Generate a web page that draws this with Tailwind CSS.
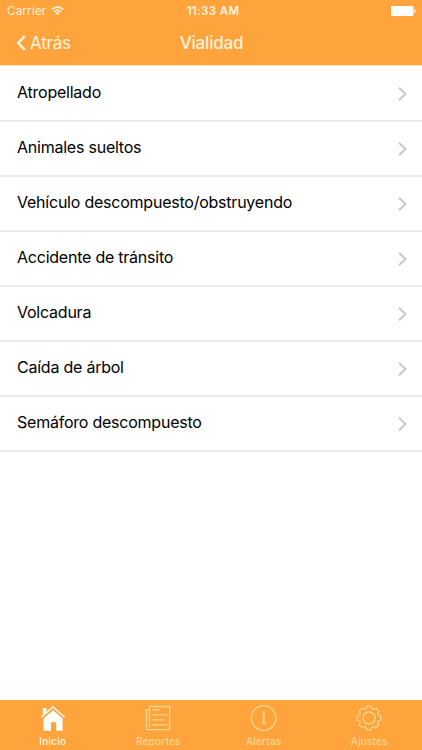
<!DOCTYPE html>
<html lang="es">
<head>
    <meta charset="UTF-8">
    <meta name="viewport" content="width=device-width, initial-scale=1.0">
    <title>Vialidad</title>
    <script src="https://cdn.jsdelivr.net/npm/@tailwindcss/browser@4"></script>
</head>
<body class="flex flex-col h-screen overflow-hidden bg-white font-['Inter',sans-serif]">
    <header class="h-[66px] shrink-0 bg-[#ffa43c] text-[#fff3de] border-b border-[#ffdcb2]">
        <div class="grid grid-cols-3 items-center h-[22px] px-[7px] text-[11.5px]">
            <div class="flex items-center gap-[5px] pt-[1px]">
                <span class="tracking-[0.25px]">Carrier</span>
                <svg class="w-[13px] h-[9px] -mt-[2px]" viewBox="0 0 13 9" fill="none" stroke="currentColor" stroke-width="1.7">
                    <path d="M.8 3.5a8.2 8.2 0 0 1 11.4 0M2.8 5.8a5.4 5.4 0 0 1 7.4 0"/>
                    <path d="M6.5 9 4.4 7a3 3 0 0 1 4.2 0Z" fill="currentColor" stroke="none"/>
                </svg>
            </div>
            <span class="text-center font-semibold tracking-[0.35px] pl-1 pt-[2px]">11:33 AM</span>
            <svg class="w-[25px] h-[10px] justify-self-end -mr-[1px]" viewBox="0 0 25 10" fill="#fff">
                <rect width="22.5" height="10" rx="1.2"/>
                <path d="M23.3 3.2h.5q.9.4.9 1.8t-.9 1.8h-.5z"/>
            </svg>
        </div>
        <div class="grid grid-cols-3 items-center h-[43px] px-4 text-[17px]">
            <a href="#" class="flex items-center gap-[4px] tracking-[-0.2px]">
                <svg class="w-[10px] h-4 -mt-[2px]" viewBox="0 0 10 16" fill="none" stroke="currentColor" stroke-width="2.5">
                    <path d="M8.8 1.2 2.2 8l6.6 6.8"/>
                </svg>
                Atrás
            </a>
            <h1 class="text-center font-medium tracking-[-0.2px] pl-[1px]">Vialidad</h1>
        </div>
    </header>

    <ul class="flex-1 pt-[1px] text-base text-black tracking-[-0.23px]">
        <li class="flex items-center justify-between h-[55px] pl-[17px] pr-[15px] border-b-2 border-[#e9e9e9]">
            <span class="pb-[3px]">Atropellado</span>
            <svg class="w-[9px] h-[14px]" viewBox="0 0 9 14" fill="none" stroke="#c7c7cc" stroke-width="2"><path d="M1 .8 7.5 7 1 13.2"/></svg>
        </li>
        <li class="flex items-center justify-between h-[55px] pl-[17px] pr-[15px] border-b-2 border-[#e9e9e9]">
            <span class="pb-[3px]">Animales sueltos</span>
            <svg class="w-[9px] h-[14px]" viewBox="0 0 9 14" fill="none" stroke="#c7c7cc" stroke-width="2"><path d="M1 .8 7.5 7 1 13.2"/></svg>
        </li>
        <li class="flex items-center justify-between h-[55px] pl-[17px] pr-[15px] border-b-2 border-[#e9e9e9]">
            <span class="pb-[3px]">Vehículo descompuesto/obstruyendo</span>
            <svg class="w-[9px] h-[14px]" viewBox="0 0 9 14" fill="none" stroke="#c7c7cc" stroke-width="2"><path d="M1 .8 7.5 7 1 13.2"/></svg>
        </li>
        <li class="flex items-center justify-between h-[55px] pl-[17px] pr-[15px] border-b-2 border-[#e9e9e9]">
            <span class="pb-[3px]">Accidente de tránsito</span>
            <svg class="w-[9px] h-[14px]" viewBox="0 0 9 14" fill="none" stroke="#c7c7cc" stroke-width="2"><path d="M1 .8 7.5 7 1 13.2"/></svg>
        </li>
        <li class="flex items-center justify-between h-[55px] pl-[17px] pr-[15px] border-b-2 border-[#e9e9e9]">
            <span class="pb-[3px]">Volcadura</span>
            <svg class="w-[9px] h-[14px]" viewBox="0 0 9 14" fill="none" stroke="#c7c7cc" stroke-width="2"><path d="M1 .8 7.5 7 1 13.2"/></svg>
        </li>
        <li class="flex items-center justify-between h-[55px] pl-[17px] pr-[15px] border-b-2 border-[#e9e9e9]">
            <span class="pb-[3px]">Caída de árbol</span>
            <svg class="w-[9px] h-[14px]" viewBox="0 0 9 14" fill="none" stroke="#c7c7cc" stroke-width="2"><path d="M1 .8 7.5 7 1 13.2"/></svg>
        </li>
        <li class="flex items-center justify-between h-[55px] pl-[17px] pr-[15px] border-b-2 border-[#e9e9e9]">
            <span class="pb-[3px]">Semáforo descompuesto</span>
            <svg class="w-[9px] h-[14px]" viewBox="0 0 9 14" fill="none" stroke="#c7c7cc" stroke-width="2"><path d="M1 .8 7.5 7 1 13.2"/></svg>
        </li>
    </ul>

    <nav class="grid grid-cols-4 h-[50px] shrink-0 bg-[#ffa43c] text-[10px] leading-3 font-medium tracking-[0.2px] text-[#ffd590]">
        <a href="#" class="flex flex-col items-center gap-[4px] pt-[5px] text-[#fff3de]">
            <svg class="w-[26px] h-[26px]" viewBox="0 0 26 26">
                <path d="M2.8 3h3.8v3.6l-3.8 3.6zM3.6 13.5 13 5.2l9.6 8.3v12.2h-6.4V17.3h-5.2v8.4H3.6z" fill="#fff"/>
                <path d="M1.4 12.2 13 1.9l11.6 10.3" fill="none" stroke="#fff" stroke-width="1.3"/>
            </svg>
            Inicio
        </a>
        <a href="#" class="flex flex-col items-center gap-[4px] pt-[5px]">
            <svg class="w-[26px] h-[26px]" viewBox="0 0 26 26" fill="none" stroke="currentColor" stroke-width="1.3">
                <path d="M4.5 1.5h20.2v23.2H3q-1.6 0-1.6-1.6V4.8h3.1M4.5 1.5v21"/>
                <path d="M7.2 4.8H15M7.2 9.8h15M7.2 14.8h12M7.2 19.8h15"/>
            </svg>
            Reportes
        </a>
        <a href="#" class="flex flex-col items-center gap-[4px] pt-[5px]">
            <svg class="w-[28px] h-[26px]" viewBox="0 0 28 26" fill="none" stroke="currentColor" stroke-width="1.3">
                <circle cx="13.7" cy="13" r="12.3"/>
                <path d="M12 10.4h1.7M11.7 18.7h4" stroke-width="1"/>
                <path d="M13.8 9.9v9" stroke-width="1.9"/>
                <circle cx="13.7" cy="7.4" r="1.2" fill="currentColor" stroke="none"/>
            </svg>
            Alertas
        </a>
        <a href="#" class="flex flex-col items-center gap-[4px] pt-[5px]">
            <svg class="w-[26px] h-[26px]" viewBox="-13 -13 26 26" fill="none" stroke="currentColor" stroke-width="1.3" stroke-linejoin="round">
                <path d="M-2.1-11.8H2.1Q2.9-6.9 6.9-9.8L9.8-6.9Q6.9-2.9 11.8-2.1V2.1Q6.9 2.9 9.8 6.9L6.9 9.8Q2.9 6.9 2.1 11.8H-2.1Q-2.9 6.9-6.9 9.8L-9.8 6.9Q-6.9 2.9-11.8 2.1V-2.1Q-6.9-2.9-9.8-6.9L-6.9-9.8Q-2.9-6.9-2.1-11.8Z"/>
                <circle r="6"/>
            </svg>
            Ajustes
        </a>
    </nav>
</body>
</html>
